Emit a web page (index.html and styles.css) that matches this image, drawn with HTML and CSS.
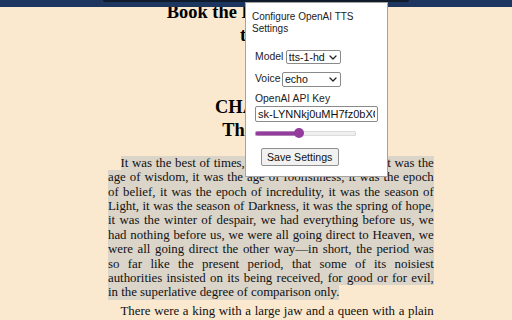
FILE: index.html
```html
<!DOCTYPE html>
<html lang="en">
<head>
<meta charset="utf-8">
<title>Reader</title>
<link rel="stylesheet" href="styles.css">
</head>
<body>
<div class="topbar"><div class="toolbar"></div></div>
<main class="book">
  <h1 class="part">Book the First—Recalled<br>to Life</h1>
  <h2 class="chapter">CHAPTER I<br>The Period</h2>
  <p class="para"><span class="hl">It was the best of times, it was the worst of times, it was the age of wisdom, it was the age of foolishness, it was the epoch of belief, it was the epoch of incredulity, it was the season of Light, it was the season of Darkness, it was the spring of hope, it was the winter of despair, we had everything before us, we had nothing before us, we were all going direct to Heaven, we were all going direct the other way—in short, the period was so far like the present period, that some of its noisiest authorities insisted on its being received, for good or for evil, in the superlative degree of comparison only.</span></p>
  <p class="para">There were a king with a large jaw and a queen with a plain face, on the throne of England; there were a king with a large jaw and a queen with a fair face, on the throne of France.</p>
</main>
<div class="popup">
  <div class="popup-title">Configure OpenAI TTS Settings</div>
  <form class="settings">
    <div class="row">
      <label class="lbl" for="model">Model</label>
      <select id="model" class="sel sel-model"><option>tts-1-hd</option><option>tts-1</option></select>
    </div>
    <div class="row">
      <label class="lbl" for="voice">Voice</label>
      <select id="voice" class="sel sel-voice"><option>echo</option><option>alloy</option></select>
    </div>
    <label class="lbl key-label" for="key">OpenAI API Key</label>
    <input id="key" class="key" type="text" value="sk-LYNNkj0uMH7fz0bXC8qT3BlbkFJ">
    <input class="speed" type="range" min="0" max="100" value="43">
    <button class="save" type="button">Save Settings</button>
  </form>
</div>
</body>
</html>
```
FILE: styles.css
```css
html, body {
  margin: 0;
  padding: 0;
}
body {
  background: #fae8cf;
  width: 512px;
  height: 320px;
  overflow: hidden;
  position: relative;
  font-family: "Liberation Serif", "Times New Roman", serif;
  color: #111;
}
.topbar {
  position: absolute;
  top: 0;
  left: 0;
  right: 0;
  height: 7px;
  background: #1c365f;
  z-index: 2;
}
.toolbar {
  margin-left: 103px;
  width: 306px;
  height: 2px;
  background: #0f1b2b;
  border-radius: 0 0 3px 3px;
}
.book {
  margin-left: 108px;
  width: 325.8px;
}
.part, .chapter {
  font-size: 18.4px;
  line-height: 22.5px;
  font-weight: bold;
  text-align: center;
  padding-right: 10px;
  margin: 0;
  color: #000;
}
.part {
  padding-top: 1px;
}
.chapter {
  margin-top: 50px;
  margin-bottom: 15px;
}
.para {
  margin: 0 0 4px;
  font-size: 12.85px;
  line-height: 14.4px;
  text-align: justify;
  text-indent: 12.5px;
}
.hl {
  background: #dad4c9;
  padding: 0.2px 0;
}
.popup {
  position: absolute;
  top: 2px;
  left: 245px;
  width: 141px;
  height: 173px;
  background: #fff;
  border: 1px solid #a3a3a3;
  z-index: 3;
  font-family: "Liberation Sans", Arial, sans-serif;
  color: #222;
  box-sizing: content-box;
}
.popup-title {
  font-size: 10px;
  line-height: 12px;
  padding: 8.4px 6px 0;
}
.settings {
  margin: 14.6px 0 0 9px;
  display: flex;
  flex-direction: column;
  align-items: flex-start;
}
.row {
  display: flex;
  align-items: center;
  gap: 1.5px;
  margin-bottom: 7.7px;
}
.lbl {
  font-size: 10.4px;
  line-height: 12px;
  color: #222;
}
.sel {
  -webkit-appearance: none;
  appearance: none;
  height: 14.5px;
  box-sizing: border-box;
  border: 1px solid #8a8a8a;
  border-radius: 2px;
  background: #fff url("data:image/svg+xml,%3Csvg xmlns='http://www.w3.org/2000/svg' width='8' height='5' viewBox='0 0 8 5'%3E%3Cpath d='M1 1l3 3 3-3' fill='none' stroke='%23222' stroke-width='1.3' stroke-linecap='round' stroke-linejoin='round'/%3E%3C/svg%3E") no-repeat right 3px center;
  background-size: 8px 5px;
  font-family: "Liberation Sans", Arial, sans-serif;
  font-size: 10.6px;
  line-height: 12px;
  padding: 0 0 0 2px;
  margin: 0;
  color: #111;
}
.sel-model {
  width: 55px;
  margin-left: 1px;
}
.sel-voice {
  width: 59px;
}
.key-label {
  margin-top: -1.2px;
}
.key {
  width: 122.5px;
  height: 16.6px;
  box-sizing: border-box;
  border: 1px solid #8a8a8a;
  border-radius: 2px;
  padding: 0 2px;
  margin: 0.4px 0 0;
  font-family: "Liberation Sans", Arial, sans-serif;
  font-size: 11px;
  color: #111;
  background: #fff;
  outline: none;
}
.speed {
  -webkit-appearance: none;
  appearance: none;
  width: 101px;
  height: 10px;
  margin: 6.3px 0 0;
  padding: 0;
  background: transparent;
}
.speed::-webkit-slider-runnable-track {
  height: 5px;
  border-radius: 3px;
  background: linear-gradient(to right, #943b9e 0, #943b9e 44%, #efefef 44%, #efefef 100%);
  box-shadow: inset 0 0 0 0.5px #c9c9c9;
}
.speed::-webkit-slider-thumb {
  -webkit-appearance: none;
  appearance: none;
  width: 10px;
  height: 10px;
  border-radius: 50%;
  background: #943b9e;
  margin-top: -2.5px;
  border: none;
}
.save {
  margin: 10px 0 0 5.7px;
  width: 78px;
  height: 17.8px;
  box-sizing: border-box;
  border: 1px solid #8f8f8f;
  border-radius: 2px;
  background: #f1f1f1;
  font-family: "Liberation Sans", Arial, sans-serif;
  font-size: 10.6px;
  color: #111;
  padding: 0;
}
```
